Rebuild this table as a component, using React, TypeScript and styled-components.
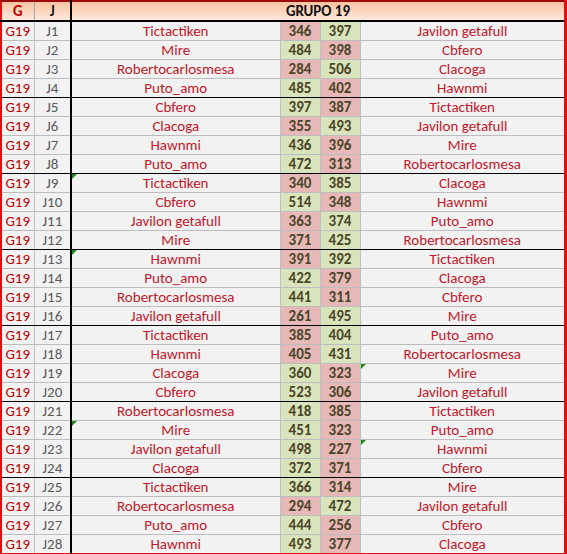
import React from "react"
import styled, { createGlobalStyle, css } from "styled-components"

const GlobalStyle = createGlobalStyle`
    html, body {
        margin: 0;
        padding: 0;
        background: #ffffff;
    }
    body {
        font-family: Carlito, Lato, "Liberation Sans", sans-serif;
    }
`

type Match = [string, number, number, string]

const matches: Match[] = [
    ["Tictactiken", 346, 397, "Javilon getafull"],
    ["Mire", 484, 398, "Cbfero"],
    ["Robertocarlosmesa", 284, 506, "Clacoga"],
    ["Puto_amo", 485, 402, "Hawnmi"],
    ["Cbfero", 397, 387, "Tictactiken"],
    ["Clacoga", 355, 493, "Javilon getafull"],
    ["Hawnmi", 436, 396, "Mire"],
    ["Puto_amo", 472, 313, "Robertocarlosmesa"],
    ["Tictactiken", 340, 385, "Clacoga"],
    ["Cbfero", 514, 348, "Hawnmi"],
    ["Javilon getafull", 363, 374, "Puto_amo"],
    ["Mire", 371, 425, "Robertocarlosmesa"],
    ["Hawnmi", 391, 392, "Tictactiken"],
    ["Puto_amo", 422, 379, "Clacoga"],
    ["Robertocarlosmesa", 441, 311, "Cbfero"],
    ["Javilon getafull", 261, 495, "Mire"],
    ["Tictactiken", 385, 404, "Puto_amo"],
    ["Hawnmi", 405, 431, "Robertocarlosmesa"],
    ["Clacoga", 360, 323, "Mire"],
    ["Cbfero", 523, 306, "Javilon getafull"],
    ["Robertocarlosmesa", 418, 385, "Tictactiken"],
    ["Mire", 451, 323, "Puto_amo"],
    ["Javilon getafull", 498, 227, "Hawnmi"],
    ["Clacoga", 372, 371, "Cbfero"],
    ["Tictactiken", 366, 314, "Mire"],
    ["Robertocarlosmesa", 294, 472, "Javilon getafull"],
    ["Puto_amo", 444, 256, "Cbfero"],
    ["Hawnmi", 493, 377, "Clacoga"],
]

// cells with the little green "number stored as text" marker
const flaggedHome = [9, 13, 22]
const flaggedAway = [19, 23]

const App = () => {
    return (
        <>
            <GlobalStyle />
            <Sheet>
                <colgroup>
                    <col style={{ width: 33 }} />
                    <col style={{ width: 37 }} />
                    <col style={{ width: 209 }} />
                    <col style={{ width: 40 }} />
                    <col style={{ width: 40 }} />
                    <col />
                </colgroup>
                <thead>
                    <tr>
                        <HeadCell $color="#c00000">G</HeadCell>
                        <HeadCell $color="#1a1a1a" $divider>
                            J
                        </HeadCell>
                        <HeadCell colSpan={4} $color="#111111">
                            GRUPO 19
                        </HeadCell>
                    </tr>
                </thead>
                <tbody>
                    {matches.map(([home, a, b, away], index) => {
                        const round = index + 1
                        const groupEnd = round % 4 === 0
                        return (
                            <tr key={round}>
                                <GroupCell $groupEnd={groupEnd}>G19</GroupCell>
                                <RoundCell $groupEnd={groupEnd}>J{round}</RoundCell>
                                <NameCell $groupEnd={groupEnd} $flag={flaggedHome.includes(round)}>
                                    {home}
                                </NameCell>
                                <ScoreCell $groupEnd={groupEnd} $win={a > b}>
                                    {a}
                                </ScoreCell>
                                <ScoreCell $groupEnd={groupEnd} $win={b > a}>
                                    {b}
                                </ScoreCell>
                                <NameCell $groupEnd={groupEnd} $flag={flaggedAway.includes(round)}>
                                    {away}
                                </NameCell>
                            </tr>
                        )
                    })}
                </tbody>
            </Sheet>
        </>
    )
}

const Sheet = styled.table`
    width: 567px;
    table-layout: fixed;
    border-collapse: collapse;
    border-top: 2px solid #9b0b0b;
    border-left: 2px solid #e01010;
    border-right: 3px solid #e01010;
    border-bottom: 2px solid #e01010;
    font-size: 15px;
    line-height: 18px;
`

const HeadCell = styled.th<{ $color: string; $divider?: boolean }>`
    height: 17px;
    padding: 0;
    text-align: center;
    font-weight: bold;
    color: ${(p) => p.$color};
    background: linear-gradient(to bottom, #f7c3a0 0%, #fad6bf 50%, #fde8da 100%);
    border-bottom: 2px solid #000;
    border-right: ${(p) => (p.$divider ? "2px solid #000" : "1px solid #a6a6a6")};
`

const BaseCell = styled.td<{ $groupEnd?: boolean }>`
    height: 18px;
    padding: 0;
    text-align: center;
    white-space: nowrap;
    overflow: hidden;
    background: #f2f2f2;
    border-right: 1px solid #c0c0c0;
    border-bottom: 1px solid ${(p) => (p.$groupEnd ? "#000" : "#bdbdbd")};
`

const GroupCell = styled(BaseCell)`
    color: #c00000;
`

const RoundCell = styled(BaseCell)`
    color: #595959;
    border-right: 2px solid #000;
`

const NameCell = styled(BaseCell)<{ $flag?: boolean }>`
    position: relative;
    color: #c0182a;
    ${(p) =>
        p.$flag &&
        css`
            &::before {
                content: "";
                position: absolute;
                left: 0;
                top: 0;
                border-top: 5px solid #1f8a1f;
                border-right: 5px solid transparent;
            }
        `}
`

const ScoreCell = styled(BaseCell)<{ $win: boolean }>`
    font-weight: bold;
    color: #4a4529;
    background: ${(p) => (p.$win ? "#d8e4bc" : "#e6b8b7")};
`

export default App
